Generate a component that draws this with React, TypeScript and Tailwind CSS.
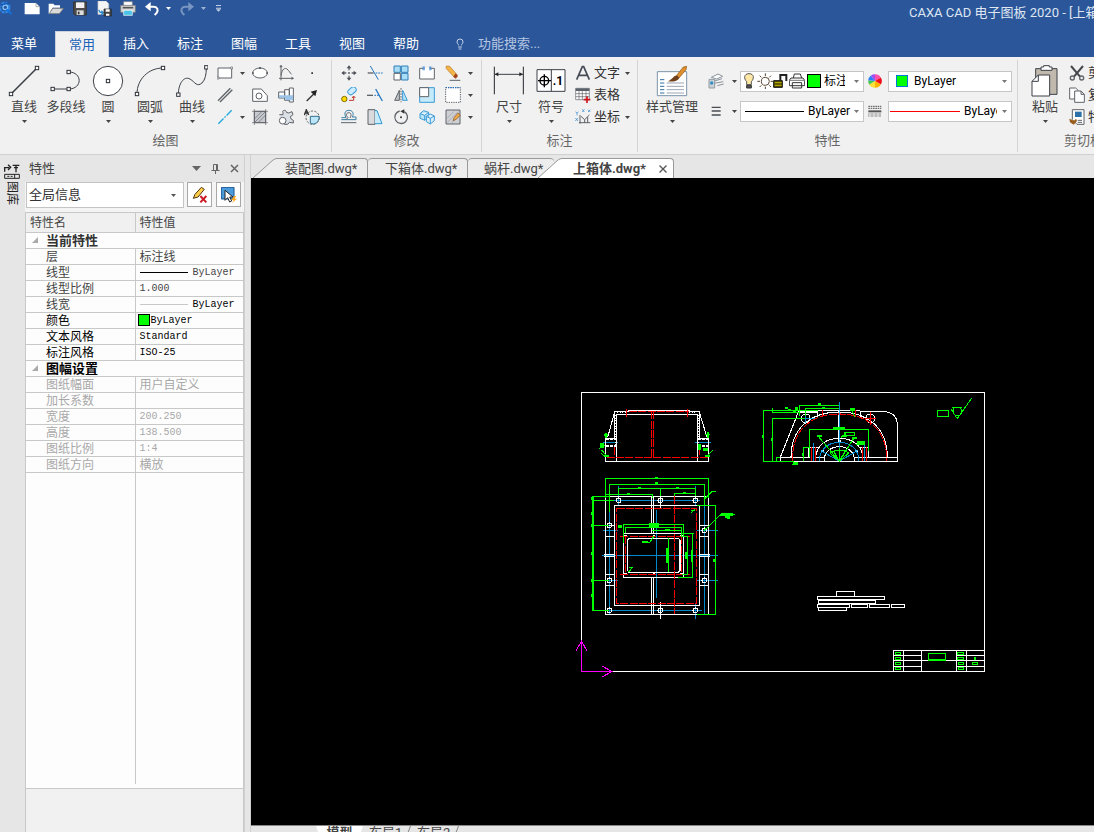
import type { ReactNode } from 'react';
import { clsx } from 'clsx';
import { Lightbulb } from 'lucide-react';

type Box = [number, number, number, number];

// 16px icons are drawn on a 48 unit grid, so a stroke of 3 is one pixel
function Icon({ children }: { children: ReactNode }) {
  return (
    <svg viewBox="0 0 48 48" className="h-4 w-4 shrink-0" fill="none" stroke="#5f6368" strokeWidth="3">
      {children}
    </svg>
  );
}

// 32px icons on a 96 unit grid
function BigIcon({ children }: { children: ReactNode }) {
  return (
    <svg viewBox="0 0 96 96" className="h-8 w-8 shrink-0" fill="none" stroke="#3c4048" strokeWidth="4">
      {children}
    </svg>
  );
}

function Arrow({ className }: { className?: string }) {
  return (
    <svg viewBox="0 0 5 3" className={clsx('h-[3px] w-[5px] shrink-0', className)} fill="currentColor">
      <path d="M0 0H5L2.5 3Z" />
    </svg>
  );
}

function Knob({ x, y }: { x: number; y: number }) {
  return <rect x={x - 5} y={y - 5} width="10" height="10" fill="#fff" stroke="#2d3138" strokeWidth="3" />;
}

/* ---------- Title bar ---------- */

function QuickButton({ label, children }: { label: string; children: ReactNode }) {
  return (
    <button aria-label={label} className="flex h-4 w-6 items-center justify-center">
      {children}
    </button>
  );
}

function TitleBar() {
  return (
    <div className="flex h-[31px] items-start overflow-hidden">
      <svg viewBox="0 0 36 48" className="mr-2 h-4 w-3 shrink-0" fill="none">
        <circle cx="14" cy="23" r="14" stroke="#2f86e6" strokeWidth="7" strokeDasharray="8 3" />
        <circle cx="16" cy="22" r="7" stroke="#7cc0ff" strokeWidth="4" />
        <path d="M20 28L34 42" stroke="#1173dd" strokeWidth="6" />
        <path d="M0 16L30 8" stroke="#0c4fb0" strokeWidth="3" />
      </svg>
      <div className="flex pt-px">
        <QuickButton label="新建">
          <Icon>
            <path d="M2 6H36L47 17V40H2Z" fill="#fff" stroke="none" />
            <path d="M36 6V17H47" stroke="#888" strokeWidth="2" />
          </Icon>
        </QuickButton>
        <QuickButton label="打开">
          <Icon>
            <path d="M2 38V8H16L20 13H36V20H14L4 38Z" fill="#fff" stroke="none" />
            <path d="M14 22H47L34 38H4Z" fill="#d9d9d9" stroke="#666" strokeWidth="2" />
          </Icon>
        </QuickButton>
        <QuickButton label="保存">
          <Icon>
            <path d="M5 3H43V42H9L5 38Z" fill="#4d4d4d" stroke="#333" />
            <path d="M12 4H37V21H12Z" fill="#f2f2f2" stroke="none" />
            <path d="M14 28H35V42H14Z" fill="#ddd" stroke="none" />
            <path d="M20 32V40" stroke="#333" strokeWidth="5" />
          </Icon>
        </QuickButton>
        <QuickButton label="另存为">
          <Icon>
            <path d="M6 0H30L38 8V40H6Z" fill="#f5f5f5" stroke="#ccc" strokeWidth="2" />
            <path d="M9 26C9 34 14 35 20 35M16 29L22 35L16 41" stroke="#2b8ccc" strokeWidth="4" />
            <path d="M24 24H46V45H24Z" fill="#444" stroke="#222" strokeWidth="2" />
            <path d="M29 25H41V32H29ZM30 38H40V44H30Z" fill="#fff" stroke="none" />
          </Icon>
        </QuickButton>
        <QuickButton label="打印">
          <Icon>
            <path d="M11 2H37V14H11Z" fill="#fff" stroke="#888" strokeWidth="2" />
            <path d="M2 13H46V34H2Z" fill="#d6d6d6" stroke="#777" strokeWidth="2" />
            <path d="M8 20H40" stroke="#555" strokeWidth="5" />
            <path d="M11 28H37V43H11Z" fill="#49c4e8" stroke="#fff" strokeWidth="2" />
          </Icon>
        </QuickButton>
        <QuickButton label="撤销">
          <Icon>
            <path d="M12 17H28C40 17 44 26 38 36L32 42" stroke="#fff" strokeWidth="6" />
            <path d="M20 3V31L3 17Z" fill="#fff" stroke="none" />
          </Icon>
        </QuickButton>
        <Arrow className="mt-1.5 mr-1 ml-0.5 text-white" />
        <QuickButton label="重做">
          <Icon>
            <path d="M36 17H20C8 17 4 26 10 36L16 42" stroke="#7995c1" strokeWidth="6" />
            <path d="M28 3V31L45 17Z" fill="#7995c1" stroke="none" />
          </Icon>
        </QuickButton>
        <Arrow className="mt-1.5 mr-2.5 ml-0.5 text-[#9fb1d0]" />
        <svg viewBox="0 0 15 21" className="mt-1 h-[7px] w-[5px]" fill="#c5d0e4">
          <path d="M0 0H15V3H0ZM0 8H15V11H0ZM0 13H15L7.5 20Z" />
        </svg>
      </div>
      <div className="ml-auto w-[185px] overflow-hidden text-[13px] leading-[26px] whitespace-nowrap text-[#dfe6f2]">
        CAXA CAD 电子图板 2020 - [上箱体.dwg]
      </div>
    </div>
  );
}

const tabs = ['插入', '标注', '图幅', '工具', '视图', '帮助'];

function RibbonTabs() {
  return (
    <nav className="flex h-[26px] items-stretch text-[13px] text-white">
      <button className="mr-[7px] w-12">菜单</button>
      <button className="w-[54px] border border-b-0 border-[#c8d2e2] bg-[#f1f1f1] text-[#1a63b8]">常用</button>
      {tabs.map((tab) => (
        <button key={tab} className="w-[54px]">
          {tab}
        </button>
      ))}
      <label className="ml-[21px] flex items-center gap-3">
        <Lightbulb className="h-3 w-3 text-[#c5d3ea]" />
        <input
          type="text"
          aria-label="功能搜索"
          placeholder="功能搜索..."
          className="w-24 bg-transparent outline-none placeholder:text-[#b6c6e2]"
        />
      </label>
    </nav>
  );
}

/* ---------- Ribbon ---------- */

function Group({
  title,
  className,
  inset,
  children,
}: {
  title: string;
  className?: string;
  inset?: string;
  children: ReactNode;
}) {
  return (
    <section className={clsx('flex shrink-0 flex-col border-r border-[#d4d4d4]', className)}>
      <div className={clsx('flex h-[71px] items-start pt-0.5', inset)}>{children}</div>
      <h2 className="text-center text-[13px] leading-[22px] text-[#666]">{title}</h2>
    </section>
  );
}

function BigButton({
  label,
  icon,
  arrow = true,
  wide = false,
}: {
  label: string;
  icon: ReactNode;
  arrow?: boolean;
  wide?: boolean;
}) {
  return (
    <button className={clsx('flex shrink-0 flex-col items-center pt-[3px]', wide ? 'w-[68px]' : 'w-[42px]')}>
      {icon}
      <span className="text-[13px] leading-5 whitespace-nowrap text-[#444]">{label}</span>
      {arrow && <Arrow className="mt-[3px] text-[#444]" />}
    </button>
  );
}

function Tool({ label, children }: { label: string; children: ReactNode }) {
  return (
    <button aria-label={label} className="flex h-[22px] w-[26px] items-center justify-center">
      <Icon>{children}</Icon>
    </button>
  );
}

function More() {
  return (
    <button aria-label="更多" className="flex h-[22px] w-[9px] items-center justify-center text-[#444]">
      <Arrow />
    </button>
  );
}

function DrawGroup() {
  return (
    <Group title="绘图" className="w-[332px]" inset="pl-[3px]">
      <BigButton
        label="直线"
        icon={
          <BigIcon>
            <path d="M9 87L87 9" strokeWidth="5" />
            <Knob x={9} y={87} />
            <Knob x={87} y={9} />
          </BigIcon>
        }
      />
      <BigButton
        label="多段线"
        arrow={false}
        icon={
          <BigIcon>
            <path d="M8 72H56C98 72 98 21 56 21" strokeWidth="3" />
            <Knob x={8} y={72} />
            <Knob x={56} y={72} />
            <Knob x={56} y={21} />
          </BigIcon>
        }
      />
      <BigButton
        label="圆"
        icon={
          <BigIcon>
            <circle cx="48" cy="48" r="44" fill="#fff" strokeWidth="3" />
            <Knob x={48} y={48} />
          </BigIcon>
        }
      />
      <BigButton
        label="圆弧"
        icon={
          <BigIcon>
            <path d="M9 87C9 42 44 9 87 9" strokeWidth="3" />
            <Knob x={9} y={87} />
            <Knob x={87} y={9} />
          </BigIcon>
        }
      />
      <BigButton
        label="曲线"
        icon={
          <BigIcon>
            <path d="M7 89C7 55 24 32 42 42C58 52 62 67 78 54C88 44 91 28 91 7" strokeWidth="3" />
            <Knob x={7} y={89} />
            <Knob x={91} y={7} />
          </BigIcon>
        }
      />
      <div className="-ml-px grid grid-cols-[35px_26px_26px_26px]">
        <div className="flex">
          <Tool label="矩形">
            <path d="M3 9H44V39H3Z" fill="#fff" />
            <path d="M0 36H6V42H0ZM41 6H47V12H41Z" fill="#fff" strokeWidth="2" />
          </Tool>
          <More />
        </div>
        <Tool label="椭圆">
          <ellipse cx="24" cy="24" rx="22" ry="15" fill="#fff" />
          <path d="M24 6V12M0 24H5M43 24H48" strokeWidth="6" />
        </Tool>
        <Tool label="公式曲线">
          <path d="M9 2V46M3 40H46M9 32C12 10 22 8 27 12C34 18 36 24 41 28" />
          <path d="M9 0L5 6H13ZM47 40L41 36V44Z" fill="#5f6368" strokeWidth="1" />
        </Tool>
        <Tool label="点">
          <path d="M22 22H27V27H22Z" fill="#333" stroke="none" />
        </Tool>

        <Tool label="平行线">
          <path d="M3 41L40 4M9 45L46 8" strokeWidth="4" />
        </Tool>
        <Tool label="等距线">
          <path d="M2 6H28L46 26V43H2Z" fill="#fff" />
          <circle cx="21" cy="27" r="9" />
        </Tool>
        <Tool label="轴孔">
          <path d="M2 15H20V33H2ZM20 8H34V40H20ZM34 3H46V45H34Z" fill="#fff" />
          <path d="M3 25H45V32H3ZM22 32H45V40H22Z" fill="#9cc3e8" stroke="none" />
        </Tool>
        <Tool label="箭头">
          <path d="M8 42L30 20" stroke="#333" strokeWidth="4" />
          <path d="M39 9L34 28L20 14Z" fill="#222" stroke="none" />
        </Tool>

        <div className="flex">
          <Tool label="中心线">
            <path d="M4 44L44 4" stroke="#1fa8dc" strokeWidth="4" strokeDasharray="22 4 5 4" />
          </Tool>
          <More />
        </div>
        <Tool label="剖面线">
          <path d="M7 7H41V41H7Z" fill="#c7cace" />
          <path d="M7 0V48M0 7H48M0 41H48M41 0V48M7 30L30 7M7 41L41 7M18 41L41 18" strokeWidth="2" />
        </Tool>
        <Tool label="齿轮">
          <path
            d="M4 17H15V11C10 3 26 1 25 10L32 12L42 8L45 17L37 23L40 31L46 34V42L34 40L29 46H19L18 39L8 38"
            fill="#dce1e7"
          />
          <circle cx="14" cy="35" r="10" fill="#fff" />
        </Tool>
        <Tool label="局部放大">
          <circle cx="26" cy="26" r="20" strokeDasharray="7 4" />
          <path d="M19 22H45C47 40 30 50 19 42Z" fill="#bde5fa" stroke="#31708f" />
          <path d="M1 18L7 2L14 18M4 12H11" stroke="#333" strokeWidth="4" />
        </Tool>
      </div>
    </Group>
  );
}

function ModifyGroup() {
  return (
    <Group title="修改" className="w-[150px]" inset="pl-1">
      <div className="grid grid-cols-[repeat(5,26px)_9px]">
        <Tool label="平移">
          <path d="M24 6V16M24 32V42M6 24H16M32 24H42M21 24H27" strokeWidth="4" />
          <path d="M24 1L17 10H31ZM24 47L17 38H31ZM1 24L10 17V31ZM47 24L38 17V31Z" fill="#4b4f55" stroke="none" />
        </Tool>
        <Tool label="裁剪">
          <path d="M2 24H20" strokeWidth="4" />
          <path d="M26 24H48" stroke="#2377c2" strokeDasharray="5 3" />
          <path d="M10 3L34 44" stroke="#2377c2" />
        </Tool>
        <Tool label="阵列">
          <path d="M3 3H22V22H3ZM25 3H45V22H25ZM25 25H45V45H25Z" fill="#a9dcf7" stroke="#307fb8" />
          <path d="M3 25H22V45H3Z" fill="#fff" stroke="#5f6368" />
        </Tool>
        <Tool label="打断">
          <path d="M12 10H2V42H46V10H36" fill="#fff" />
          <path d="M15 4V16M33 4V16" stroke="#1570cc" />
          <path d="M10 5L15 10L10 15M38 5L33 10L38 15" stroke="#1570cc" strokeWidth="2" />
        </Tool>
        <Tool label="删除">
          <path d="M4 3L14 4L36 29L28 37L3 10Z" fill="#f3b54a" stroke="#b9731b" strokeWidth="2" />
          <path d="M32 25L39 33L32 41L25 35Z" fill="#a2421c" stroke="none" />
          <path d="M14 46H46" />
        </Tool>
        <More />

        <Tool label="平移复制">
          <rect x="20" y="3" width="27" height="17" rx="8" fill="#ccecfb" stroke="#3b9bd6" transform="rotate(-40 33 12)" />
          <circle cx="10" cy="36" r="8" fill="#fd0" stroke="#806b00" />
          <path d="M24 40H38V28M33 33L38 27L43 33" stroke="#c0392b" />
        </Tool>
        <Tool label="延伸">
          <path d="M0 25H18" strokeWidth="4" />
          <path d="M22 25H38" stroke="#2377c2" strokeDasharray="5 3" />
          <path d="M26 6L46 42" stroke="#2377c2" strokeWidth="4" />
        </Tool>
        <Tool label="镜像">
          <path d="M19 10V40H5Z" fill="#bfc3c8" />
          <path d="M29 10V40H43Z" fill="#b5e3fa" stroke="#3b9bd6" />
          <path d="M24 3V46" strokeDasharray="5 3" />
        </Tool>
        <Tool label="缩放">
          <path d="M2 2H46V46H2Z" fill="#c5eafa" stroke="#3b9bd6" />
          <path d="M2 2H29V29H2Z" fill="#fff" stroke="#5f6368" />
        </Tool>
        <Tool label="分解">
          <path d="M2 2H46V46H2Z" fill="#fff" strokeDasharray="4 3" />
          <path d="M2 2H46" stroke="#1570cc" strokeDasharray="4 3" />
        </Tool>
        <More />

        <Tool label="偏移">
          <path d="M1 26H15C7 10 15 4 24 4C34 4 40 12 34 24H45V32H1" stroke="#397fa5" />
          <path d="M0 41H46M15 32L21 26C13 18 16 11 24 11C31 12 32 19 27 27" />
        </Tool>
        <Tool label="拉伸">
          <path d="M3 2H24V46H3Z" fill="#d8dadd" />
          <path d="M24 5H30L45 44H24" fill="#c7ebfa" stroke="#2c9bd2" />
        </Tool>
        <Tool label="旋转">
          <path d="M34 8A19 19 0 1 1 20 6" strokeWidth="4" />
          <path d="M34 1V14L22 7Z" fill="#333" stroke="none" />
          <circle cx="24" cy="25" r="3" fill="#333" stroke="none" />
        </Tool>
        <Tool label="特性匹配">
          <path d="M3 14L14 5L29 10V23L18 34L3 28ZM3 14L17 19L29 10M17 19V33" fill="#b9e5f8" stroke="#3b9bd6" />
          <path d="M22 22L34 15L46 21V35L34 45L22 38ZM22 22L34 28L46 21M34 28V44" fill="#d8effa" stroke="#3b9bd6" />
        </Tool>
        <Tool label="编辑填充">
          <path d="M3 3H45V45H3Z" fill="#ced0d4" />
          <path d="M7 27L27 7M7 40L40 7M20 42L42 20" strokeWidth="1" />
          <path d="M24 35L28 25L39 12L46 18L34 31Z" fill="#edaa4c" stroke="#8a5520" strokeWidth="2" />
        </Tool>
        <More />
      </div>
    </Group>
  );
}

function TextTool({ label, arrow, icon }: { label: string; arrow?: boolean; icon: ReactNode }) {
  return (
    <button className="flex h-[22px] items-center gap-[3px] text-[13px] whitespace-nowrap text-[#333]">
      <Icon>{icon}</Icon>
      {label}
      {arrow && <Arrow className="ml-0.5 text-[#444]" />}
    </button>
  );
}

function AnnotateGroup() {
  return (
    <Group title="标注" className="w-[156px]" inset="pl-1.5">
      <BigButton
        label="尺寸"
        icon={
          <BigIcon>
            <path d="M4 5V88M91 5V88" stroke="#25272d" strokeWidth="3" />
            <path d="M6 28H90" strokeWidth="3" />
            <path d="M5 28L16 22V34ZM90 28L79 22V34Z" fill="#25272d" stroke="none" />
          </BigIcon>
        }
      />
      <BigButton
        label="符号"
        icon={
          <BigIcon>
            <path d="M6 14H90V79H6ZM49 14V79" fill="#fff" strokeWidth="3" />
            <circle cx="28" cy="47" r="13" stroke="#000" />
            <path d="M28 28V67M9 47H48" stroke="#000" />
            <text x="53" y="60" fill="#000" stroke="none" className="text-[36px] font-bold">
              .1
            </text>
          </BigIcon>
        }
      />
      <div className="ml-[3px] flex flex-col">
        <TextTool
          label="文字"
          arrow
          icon={<path d="M5 44L22 5H26L43 44M11 31H37" stroke="#454b55" strokeWidth="5" />}
        />
        <TextTool
          label="表格"
          icon={
            <>
              <path d="M2 4H43V38H2ZM2 20H43M2 29H43M12 12V38M22 12V38M33 12V38" fill="#fff" strokeWidth="2" />
              <path d="M2 4H43V12H2Z" fill="#5b626c" stroke="none" />
              <path d="M36 28V48M26 38H46" stroke="#d3121b" strokeWidth="5" />
            </>
          }
        />
        <TextTool
          label="坐标"
          arrow
          icon={
            <>
              <path d="M15 44V18M12 41H46M18 22L29 32L43 18M29 32V42M38 42V24" strokeWidth="3" />
              <path d="M2 8L6 13L10 8M6 13V19M1 27L9 36M9 27L1 36M22 1L28 9M28 1L22 9M39 2L46 9M46 2L39 9" stroke="#2480c8" strokeWidth="2" />
            </>
          }
        />
      </div>
    </Group>
  );
}

function Combo({ label, value, className, children }: { label: string; value: string; className?: string; children: ReactNode }) {
  return (
    <div className="flex h-[21px] w-[124px] items-center border border-[#c6c6c6] bg-white pr-1 text-black">
      {children}
      <select aria-label={label} className={clsx('h-full min-w-0 appearance-none overflow-hidden text-xs outline-none', className)}>
        <option>{value}</option>
      </select>
      <Arrow className="ml-auto text-[#777]" />
    </div>
  );
}

function PropertyGroup() {
  return (
    <Group title="特性" className="w-[380px]">
      <BigButton
        label="样式管理"
        wide
        icon={
          <BigIcon>
            <path d="M4 20H92V92H4Z" fill="#fff" stroke="#7b95a9" strokeWidth="3" />
            <path d="M12 44H25M12 54H25M12 64H25M12 74H25M12 84H25" stroke="#2f6fa5" strokeWidth="3" />
            <path d="M32 54H84M32 64H84M32 74H84M32 84H84" stroke="#9ba5b4" strokeWidth="3" />
            <path d="M62 31L82 6L92 4L90 14L69 39Z" fill="#de902d" stroke="#8d5013" strokeWidth="2" />
            <path d="M63 31L70 39C64 50 50 51 36 49C50 43 50 34 63 31Z" fill="#70401a" stroke="none" />
          </BigIcon>
        }
      />
      <div className="mt-1 ml-0.5 grid grid-cols-[32px_124px_24px_124px] grid-rows-[30px_30px] items-center">
        <div className="flex items-center gap-2 text-[#444]">
          <Icon>
            <path d="M10 13L30 3L44 10L26 18ZM20 24L42 17M18 31L46 26M28 38L47 33" fill="#fff" stroke="#8a939d" />
            <path d="M3 19H20V45H3Z" fill="#ccd1d6" stroke="#939ba3" />
            <circle cx="11" cy="30" r="5" fill="#2f8fc6" stroke="none" />
          </Icon>
          <Arrow />
        </div>
        <Combo label="图层" value="标注线" className="ml-[3px] w-[21px]">
          <Icon>
            <path d="M24 2C8 2 8 17 17 26V35H31V26C40 17 40 2 24 2Z" fill="#ffe8a5" stroke="#555" />
            <path d="M17 37H31V45H17Z" fill="#555" stroke="#333" />
          </Icon>
          <Icon>
            <circle cx="25" cy="25" r="12" fill="#fff" stroke="#5b4632" strokeWidth="3" />
            <path d="M25 1V9M25 41V48M1 25H9M41 25H48M8 8L13 13M37 37L42 42M8 42L13 37M37 13L42 8" stroke="#5b4632" />
          </Icon>
          <Icon>
            <path d="M2 23H28V43H2Z" fill="#544a00" stroke="#111" />
            <path d="M5 29H26M5 37H26" stroke="#c1b800" />
            <path d="M22 23V6H40V24" stroke="#222" strokeWidth="6" />
          </Icon>
          <Icon>
            <path d="M13 15L16 3H34L38 15M6 15H42L47 22V38H1V22ZM10 29H38V45H10Z" fill="#fff" stroke="#333" />
            <path d="M2 22H46" stroke="#777" />
          </Icon>
          <span className="ml-0.5 h-3.5 w-3.5 shrink-0 border border-black bg-[#00ff00]" />
        </Combo>
        <svg viewBox="-24 -24 48 48" className="ml-1 h-3.5 w-3.5">
          <path d="M0 0V-23A23 23 0 0 1 20 -12Z" fill="#ff4fa8" />
          <path d="M0 0L20 -12A23 23 0 0 1 20 12Z" fill="#f00a1e" />
          <path d="M0 0L20 12A23 23 0 0 1 0 23Z" fill="#ffb400" />
          <path d="M0 0V23A23 23 0 0 1 -20 12Z" fill="#ffe03a" />
          <path d="M0 0L-20 12A23 23 0 0 1 -23 -3Z" fill="#3fc850" />
          <path d="M0 0L-23 -3A23 23 0 0 1 -14 -19Z" fill="#2e7dff" />
          <path d="M0 0L-14 -19A23 23 0 0 1 0 -23Z" fill="#a050f0" />
        </svg>
        <Combo label="颜色" value="ByLayer" className="ml-1.5 w-16">
          <span className="ml-[7px] h-3 w-3 shrink-0 border border-[#0078d7] bg-[#00ff00]" />
        </Combo>

        <div className="flex items-center gap-2 text-[#444]">
          <Icon>
            <path d="M11 13H38M11 24H38M11 36H38" stroke="#4a4d52" strokeWidth="4" />
          </Icon>
          <Arrow />
        </div>
        <Combo label="线型" value="ByLayer" className="ml-1 w-[45px]">
          <span className="ml-1 h-px w-[59px] bg-black" />
        </Combo>
        <svg viewBox="0 0 42 36" className="ml-1 h-3 w-3.5" stroke="#555">
          <path d="M1 4H40M1 10H40" strokeWidth="3" strokeDasharray="5 2" />
          <path d="M1 19H40" strokeWidth="6" />
          <path d="M1 27H40M1 33H40" strokeWidth="3" strokeDasharray="2 2" />
        </svg>
        <Combo label="线宽" value="ByLayer" className="ml-1 w-[33px]">
          <span className="ml-px h-px w-[70px] bg-[#ff0000]" />
        </Combo>
      </div>
    </Group>
  );
}

function ClipboardGroup() {
  return (
    <Group title="剪切板" className="w-[132px]" inset="pl-1.5">
      <BigButton
        label="粘贴"
        icon={
          <BigIcon>
            <path d="M20 11H84V88H20Z" fill="#c1b8ae" strokeWidth="3" />
            <path d="M36 6H44V2H61V6H69V16H36Z" fill="#fff" strokeWidth="3" />
            <path d="M28 30H62V93H9V49Z" fill="#fff" strokeWidth="3" />
            <path d="M28 30V49H9" strokeWidth="3" />
          </BigIcon>
        }
      />
      <div className="ml-[3px] flex flex-col">
        <TextTool
          label="剪切"
          icon={
            <>
              <path d="M6 3L33 35M42 3L15 35" stroke="#44474b" strokeWidth="6" />
              <circle cx="10" cy="39" r="6" strokeWidth="4" />
              <circle cx="38" cy="39" r="6" strokeWidth="4" />
            </>
          }
        />
        <TextTool
          label="复制"
          icon={
            <>
              <path d="M2 3H20L28 11V36H2Z" fill="#fff" />
              <path d="M17 12H36L46 22V46H17ZM36 12V22H46" fill="#fff" />
            </>
          }
        />
        <TextTool
          label="特性粘贴"
          icon={
            <>
              <path d="M10 2H45V46H24L10 32Z" fill="#fff" />
              <path d="M18 8H38V24H18Z" fill="#2c72aa" stroke="none" />
              <path d="M26 34H39M26 40H39" />
              <path d="M1 29L15 35L21 29L24 36L14 47L3 40Z" fill="#9a5c1c" stroke="none" />
            </>
          }
        />
      </div>
    </Group>
  );
}

/* ---------- Property panel ---------- */

type Row = { name: string; value?: string; line?: 'dark' | 'light'; swatch?: boolean };

const currentRows: Row[] = [
  { name: '层', value: '标注线' },
  { name: '线型', value: 'ByLayer', line: 'dark' },
  { name: '线型比例', value: '1.000' },
  { name: '线宽', value: 'ByLayer', line: 'light' },
  { name: '颜色', value: 'ByLayer', swatch: true },
  { name: '文本风格', value: 'Standard' },
  { name: '标注风格', value: 'ISO-25' },
];

const sheetRows: Row[] = [
  { name: '图纸幅面', value: '用户自定义' },
  { name: '加长系数' },
  { name: '宽度', value: '200.250' },
  { name: '高度', value: '138.500' },
  { name: '图纸比例', value: '1:4' },
  { name: '图纸方向', value: '横放' },
];

function Category({ name, dark }: { name: string; dark?: boolean }) {
  return (
    <tr className="h-4 border-b border-[#c8c8c8]">
      <th colSpan={2} className={clsx('p-0 text-left text-[13px] leading-[15px] font-bold', dark ? 'text-black' : 'text-[#333]')}>
        <div className="flex h-[15px] items-center">
          <svg viewBox="0 0 6 6" className="mr-2 ml-1.5 h-1.5 w-1.5" fill="#aaa">
            <path d="M6 0V6H0Z" />
          </svg>
          {name}
        </div>
      </th>
    </tr>
  );
}

function PropertyRow({ row, className }: { row: Row; className: string }) {
  const cjk = /[\u4e00-\u9fff]/.test(row.value ?? '');
  return (
    <tr className={clsx('h-4 border-b border-[#c8c8c8] text-xs leading-[17px]', className)}>
      <td className="border-r border-[#c8c8c8] py-0 pr-0 pl-5">
        <div className="h-[15px]">{row.name}</div>
      </td>
      <td className="p-0">
        <div
          className={clsx(
            'flex h-[15px]',
            cjk ? 'items-start' : 'items-center',
            row.swatch ? 'gap-px pl-0.5' : 'gap-[5px] pl-1',
            row.line === 'light' && 'text-black',
          )}
        >
          {row.line && <span className={clsx('h-px w-12', row.line === 'dark' ? 'bg-black' : 'bg-[#c8c8c8]')} />}
          {row.swatch && <span className="h-3 w-3 border border-black bg-[#00ff00]" />}
          <span className={cjk ? 'text-xs leading-[17px]' : "font-['Liberation_Mono',monospace] text-[10px]"}>
            {row.value}
          </span>
        </div>
      </td>
    </tr>
  );
}

function PropertyPanel() {
  return (
    <aside className="flex w-[219px] shrink-0 flex-col">
      <header className="flex h-[27px] shrink-0 items-center gap-2.5 pr-[5px] pl-1 text-[#666]">
        <h2 className="mr-auto text-[13px] text-[#444]">特性</h2>
        <button aria-label="选项">
          <svg viewBox="0 0 9 5" className="h-[5px] w-[9px]" fill="currentColor">
            <path d="M0 0H9L4.5 5Z" />
          </svg>
        </button>
        <button aria-label="固定">
          <svg viewBox="0 0 9 10" className="h-2.5 w-[9px]" fill="none" stroke="currentColor">
            <path d="M2.5 6V.5H6.5V6M5.5 1V6M.5 6.5H8.5M4.5 7V10" />
          </svg>
        </button>
        <button aria-label="关闭">
          <svg viewBox="0 0 9 9" className="h-[9px] w-[9px]" stroke="currentColor" strokeWidth="1.5">
            <path d="M1 1L8 8M8 1L1 8" />
          </svg>
        </button>
      </header>

      <div className="flex shrink-0 gap-[3px] bg-[#f4f4f4] pb-1 pl-px">
        <div className="flex h-[26px] w-[158px] items-center border border-[#c4c4c4] bg-white pr-[7px] pl-0.5">
          <select aria-label="对象" className="flex-1 appearance-none text-[13px] text-[#333] outline-none">
            <option>全局信息</option>
          </select>
          <Arrow className="text-[#555]" />
        </div>
        <button aria-label="清除选择" className="mr-px flex h-[25px] w-[25px] items-center justify-center border border-[#a8a8a8] bg-white">
          <Icon>
            <path d="M4 34L9 22L28 1L37 7L18 30Z" fill="#ffd047" stroke="#4d3410" strokeWidth="3" />
            <path d="M25 27L43 46M43 27L25 46" stroke="#cc1c26" strokeWidth="6" />
          </Icon>
        </button>
        <button aria-label="选择对象" className="flex h-[25px] w-[25px] items-center justify-center border border-[#a8a8a8] bg-white">
          <Icon>
            <path d="M1 1H39V36H1Z" fill="#4b9bda" stroke="#145596" />
            <path d="M12 10V40L20 32L26 45L32 42L26 30H36Z" fill="#fff" stroke="#222" />
            <path d="M39 27L31 39H38L33 48L48 35H40L46 27Z" fill="#ffa51e" stroke="none" />
          </Icon>
        </button>
      </div>

      <div className="flex min-h-0 flex-1 flex-col border border-b-0 border-[#c8c8c8] bg-[#fdfdfd]">
        <table className="w-full table-fixed border-collapse">
          <colgroup>
            <col className="w-[109px]" />
            <col />
          </colgroup>
          <thead>
            <tr className="h-[19px] border-b border-[#c8c8c8] bg-[#f0f0f0] text-xs leading-4 text-[#444]">
              <th className="border-r border-[#c8c8c8] pt-0.5 pr-0 pb-0 pl-1 text-left font-normal">特性名</th>
              <th className="pt-0.5 pr-0 pb-0 pl-1 text-left font-normal">特性值</th>
            </tr>
          </thead>
          <tbody>
            <Category name="当前特性" />
            {currentRows.map((row, i) => (
              <PropertyRow key={row.name} row={row} className={i < 4 ? 'text-[#444]' : 'text-black'} />
            ))}
            <Category name="图幅设置" dark />
            {sheetRows.map((row) => (
              <PropertyRow key={row.name} row={row} className="text-[#a8a8a8]" />
            ))}
          </tbody>
        </table>
        <div className="w-[110px] flex-1 border-r border-[#c8c8c8]" />
        <div className="mt-1 h-11 border-t border-[#c8c8c8] bg-[#f1f1f1]" />
      </div>
    </aside>
  );
}

/* ---------- Drawing ---------- */

// small dimension texts, zoomed out so far that they are only blocks
const marks: Box[] = [
  [223, 414, 28, 15], [274, 488, 7, 46], [331, 500, 7, 22], [348, 494, 6, 36], [130, 420, 11, 8], [415, 521, 7, 9],
  [48, 336, 9, 9], [48, 381, 8, 9], [48, 417, 8, 8], [48, 501, 8, 9], [48, 582, 8, 8], [48, 627, 8, 9],
  [240, 277, 9, 6], [240, 292, 9, 7], [189, 306, 9, 6], [303, 306, 9, 6], [156, 324, 9, 6], [324, 321, 9, 6],
  [270, 431, 16, 6], [201, 468, 18, 5], [438, 384, 36, 8], [450, 393, 15, 6], [456, 398, 8, 5],
  [90, 145, 7, 15], [76, 174, 11, 14], [88, 211, 14, 6], [395, 142, 7, 18], [370, 178, 7, 18], [384, 188, 16, 8], [390, 211, 14, 6],
];

const bolts: [number, number][] = [
  [131, 346], [256, 346], [361, 346], [103, 421], [388, 436], [103, 586], [388, 586], [103, 676], [256, 676], [361, 676],
];

const noteBoxes: Box[] = [
  [109, 34, 55, 15], [52, 49, 202, 10], [55, 61, 172, 10], [52, 73, 97, 10], [154, 73, 49, 10], [208, 73, 61, 10], [275, 73, 39, 10], [55, 83, 85, 9],
];

const titleCells: Box[] = [
  [286, 217, 16, 7], [286, 232, 16, 7], [286, 247, 16, 7], [286, 262, 16, 7], [385, 220, 52, 20],
  [472, 217, 19, 7], [472, 232, 19, 7], [475, 247, 16, 7], [475, 262, 16, 7], [517, 247, 16, 7],
];

function Boxes({ items, fill, stroke }: { items: Box[]; fill?: string; stroke?: string }) {
  return items.map(([x, y, w, h]) => (
    <rect key={`${x}-${y}`} x={x} y={y} width={w} height={h} fill={fill ?? 'none'} stroke={stroke ?? 'none'} />
  ));
}

function Drawing() {
  return (
    <svg className="h-full w-full" fill="none" shapeRendering="crispEdges">
      <g transform="translate(-251 -178)">
        <path d="M581.5 641V392.5H984.5V671.5H612" stroke="#fff" />
        <path d="M581.5 671V641M576 651L581.5 641L587 651M581 671.5H612M602 666L612 671.5L602 677" stroke="#f0f" />

        {/* Front and plan views */}
        <g transform="translate(575 385) scale(.33333)" strokeWidth="3.1">
          <g stroke="#0af" opacity=".8">
            <path d="M85 172H130M360 172H408M103 380V688M388 361V688M244 375V640M81 511H428M100 346H374M92 676H380" />
            <path d="M85 436H130M366 436H428M92 586H130M366 586H428M131 303V360M361 303V360M256 310V334M361 655V702" />
          </g>
          <g stroke="#fff">
            <path d="M91 229H401V160H374V79H343V76H160V79H118V160H91ZM124 229V88H368V229" />
            <path d="M117 88L98 157M375 88L396 157" />
            <path d="M121 90V180M371 90V180M126 83H160M342 83H366" strokeDasharray="3 5" />
            <path d="M94 163H122M94 184H124M370 163H400M370 184H400" strokeWidth="5" strokeDasharray="9 3" />
            <path d="M91 334H401V688H91ZM118 361H374V661H118ZM230 334V445M236 334V445M230 577V688M236 577V688" />
            <path d="M146 445H326V577H146ZM162 460H310L315 466V556L310 562H162L157 556V466Z" />
            <path d="M91 421H118M91 454H118M374 421H401M374 454H401M91 568H118M91 601H118M374 568H401M374 601H401" />
            <path d="M88 508H118M88 514H118M374 508H404M374 514H404M256 334V370M256 650V702" />
            {bolts.map(([x, y]) => (
              <circle key={`${x}-${y}`} cx={x} cy={y} r="7" />
            ))}
            <path d="M148 454h7M148 568h7M316 454h7M316 568h7M233 454h7M233 568h7" strokeWidth="7" />
          </g>
          <g stroke="#ff0000" strokeDasharray="24 4">
            <path d="M95 217H401M162 80H342M230 79V217M236 79V217M118 187V217M373 187V217" />
            <path d="M154 73V100M338 73V100M298 334V688M125 370H364V655H125Z" />
            <path d="M136 454H346M136 568H346M151 454V568M320 454V568" />
          </g>
          <g stroke="#0f0">
            <path d="M91 340V280H401V340M103 380V298H388V360M131 330V310H361V334M91 328H232V340M298 334V325H361M256 310V334" />
            <path d="M103 334H54V676H103M54 346H118M54 421H103M54 586H103M365 361H421V688H365" />
            <path d="M145 475V418H326V455M152 445V427H320V455M232 436H320M320 445H356M352 445V577H310M320 454H337V568H320M281 460V562" />
            <path d="M388 436L438 388H480M390 340L410 320H423M218 472H224L237 454M160 562L174 546M162 547H175M348 377H358L361 371M348 384L356 375" />
            <path d="M72 192L88 180M80 195L92 210M78 205L90 215M413 195L396 215M385 195H400M88 150H98M390 148H404" />
          </g>
          <Boxes items={marks} fill="#0f0" />
        </g>

        {/* Side view */}
        <g transform="translate(755 388) scale(.33333)" strokeWidth="3.1">
          <g stroke="#fff">
            <path d="M76 220H427V112Q427 70 378 70H316V86M130 72L76 208H162V178H190M316 178H340V208H427M188 86V67H316M130 72H188M250 70V160M76 208V220" />
            <path d="M108 208C108 118 170 72 253 72S397 118 397 208" />
            <path d="M182 208C185 170 215 151 253 151S320 170 324 208H340M207 220C207 193 226 176 253 176S299 193 299 220M182 208H207M299 208H324" />
            <circle cx="152" cy="91" r="13" />
            <circle cx="346" cy="91" r="13" />
            <path d="M248 160H257M198 190H207M299 190H308" strokeWidth="7" />
          </g>
          <g stroke="#ff0000">
            <path d="M113 220C108 130 165 78 253 78S400 130 394 220" strokeDasharray="24 4" />
            <path d="M330 91H362M346 72V110M202 67V86M301 67V86M169 178V220M181 178V220M323 178V220M334 178V220" />
          </g>
          <g stroke="#0af" opacity=".8">
            <path d="M253 42V220M136 91H180M152 76V106M175 165V220M328 165V220M253 220L197 187M253 220L309 187M193 220C193 184 220 163 253 163S312 184 312 220" />
          </g>
          <g stroke="#0f0">
            <path d="M76 220H25V67H188M52 61V73H136M118 220H52V91H150M134 84V52H253M152 84V61H253M163 208V124H340V190M145 220V178H163M64 208H76M64 208V220" />
            <path d="M253 220L190 145M253 220L298 148M253 220L224 194M253 220L282 194M253 220V180M253 220L235 188M253 220L271 188M226 195Q253 178 282 195" />
            <path d="M300 86L288 64M92 60L130 75M110 230L130 222M258 148L270 140M302 170H325M308 160H327V170" />
            <rect x="270" y="134" width="29" height="8" />
            <path d="M547 67H581V85H547ZM587 62L607 92L650 30M592 58H620" />
            <circle cx="607" cy="70" r="13" />
          </g>
          <Boxes
            items={[[234, 118, 36, 7], [189, 46, 9, 6], [201, 57, 9, 6], [120, 57, 9, 8], [286, 61, 15, 7], [21, 142, 6, 8], [48, 151, 6, 7], [141, 196, 6, 7], [115, 223, 14, 7], [187, 142, 14, 5], [262, 140, 14, 8], [306, 159, 20, 11], [292, 147, 13, 5], [90, 57, 9, 5]]}
            fill="#0f0"
          />
        </g>

        {/* Notes and title block */}
        <g transform="translate(800 580) scale(.33333)" strokeWidth="3.1">
          <Boxes items={noteBoxes} stroke="#fff" />
          <path
            d="M280 272V211H553M310 211V272M364 211V272M469 211V272M499 211V272M280 226H364M280 241H553M280 259H364M469 226H553M469 259H553"
            stroke="#fff"
          />
          <Boxes items={titleCells} stroke="#0f0" />
          <Boxes items={[[522, 231, 6, 9]]} fill="#0f0" />
        </g>
      </g>
    </svg>
  );
}

/* ---------- Documents ---------- */

function Slant({ active }: { active?: boolean }) {
  return (
    <svg viewBox="0 0 24 20" className={clsx('relative h-5 w-6 shrink-0', active && '-ml-4')}>
      <path d="M0 20L20 2Q22 .5 24 .5V20Z" fill={active ? '#fff' : '#ededed'} />
      <path d="M0 20L20 2Q22 .5 24 .5" fill="none" stroke="#999" />
    </svg>
  );
}

function DocumentTabs() {
  return (
    <div className="flex h-[23px] shrink-0 items-end pl-0.5 text-[13px] leading-[19px] text-[#444]">
      <Slant />
      <button className="h-5 w-[91px] rounded-tr-sm border-t border-r border-[#999] bg-[#ededed] pl-2 text-left">装配图.dwg*</button>
      <button className="h-5 w-[100px] rounded-t-sm border-t border-r border-[#999] bg-[#ededed] pl-[17px] text-left">下箱体.dwg*</button>
      <button className="h-5 w-[86px] rounded-t-sm border-t border-[#999] bg-[#ededed] pl-4 text-left">蜗杆.dwg*</button>
      <Slant active />
      <div className="flex h-5 w-28 items-center justify-between rounded-tr-sm border-t border-r border-[#999] bg-white pr-1.5 pl-[11px]">
        <button className="font-bold">上箱体.dwg*</button>
        <button aria-label="关闭文档">
          <svg viewBox="0 0 8 8" className="h-2 w-2" stroke="#555" strokeWidth="1.3">
            <path d="M.5 .5L7.5 7.5M7.5 .5L.5 7.5" />
          </svg>
        </button>
      </div>
    </div>
  );
}

function LayoutTabs() {
  return (
    <div className="flex h-[7px] shrink-0 items-start overflow-hidden border-t border-[#888] bg-[#e6e6e6] pl-[65px] text-[13px] leading-[13px] text-[#444]">
      <button className="h-[13px] w-[47px] bg-white font-bold [clip-path:polygon(0_0,100%_0,90%_100%,10%_100%)]">模型</button>
      {['布局1', '布局2'].map((name) => (
        <button key={name} className="flex h-[13px] w-12 justify-between pl-1.5">
          {name}
          <svg viewBox="0 0 6 13" className="h-[13px] w-1.5" fill="none" stroke="#888">
            <path d="M5.5 0L.5 13" />
          </svg>
        </button>
      ))}
    </div>
  );
}

export default function App() {
  return (
    <div className="flex h-screen flex-col overflow-hidden bg-[#e6e6e6] font-[Roboto,'Noto_Sans_CJK_SC',sans-serif]">
      <header className="shrink-0 bg-[#2b579a]">
        <TitleBar />
        <RibbonTabs />
      </header>
      <div className="flex h-[98px] shrink-0 overflow-hidden border-b border-[#d0d0d0] bg-[#f1f1f1] pt-[3px] pb-0.5">
        <DrawGroup />
        <ModifyGroup />
        <AnnotateGroup />
        <PropertyGroup />
        <ClipboardGroup />
      </div>
      <div className="flex min-h-0 flex-1">
        <div className="w-[25px] shrink-0 pt-2">
          <button className="ml-1 flex w-4 flex-col items-center text-[#222]">
            <svg viewBox="0 0 48 54" className="h-[18px] w-4" fill="none" stroke="#222" strokeWidth="4">
              <path d="M2 26V14H16M12 5L20 13L12 21M26 7H46M30 14H42M36 7V28" />
              <path d="M2 34H46V46H2ZM10 40H16M20 40H26M32 34V46" strokeWidth="3" />
            </svg>
            <span className="text-xs leading-4 [text-orientation:sideways] [writing-mode:vertical-rl]">图库</span>
          </button>
        </div>
        <PropertyPanel />
        <div className="w-[7px] shrink-0 border-x border-[#d0d0d0]" />
        <main className="flex min-w-0 flex-1 flex-col">
          <DocumentTabs />
          <div className="min-h-0 flex-1 bg-black">
            <Drawing />
          </div>
          <LayoutTabs />
        </main>
      </div>
    </div>
  );
}
